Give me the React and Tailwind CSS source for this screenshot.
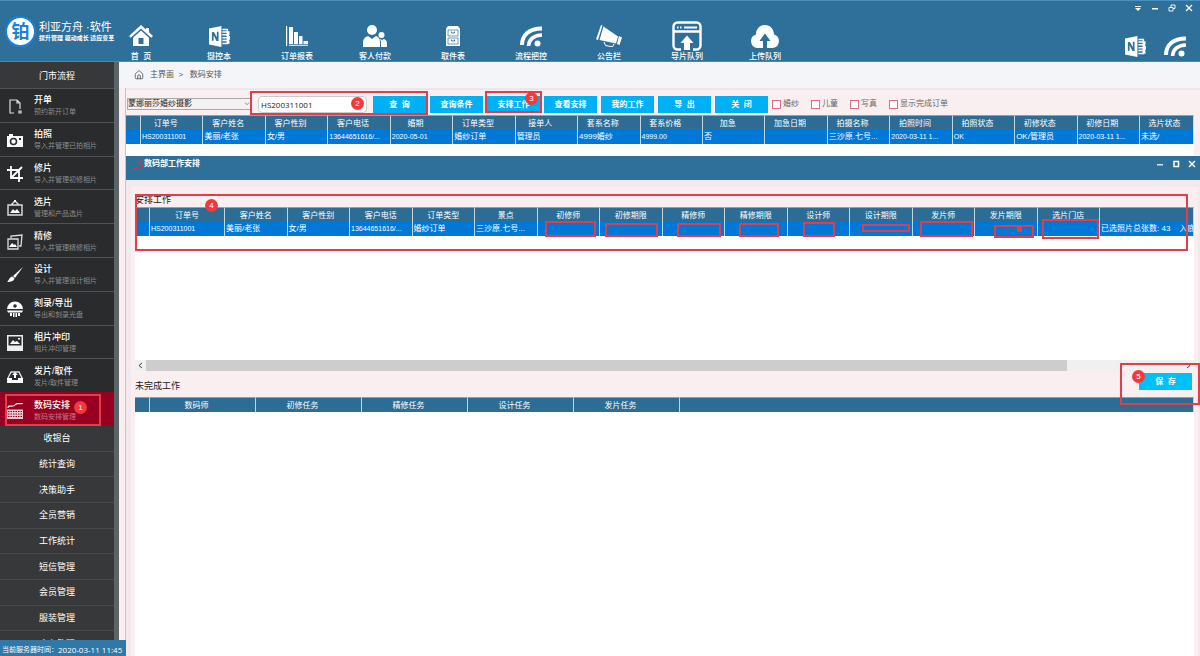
import { useState } from "react";
import { Home } from "lucide-react";
import clsx from "clsx";

const HomeIcon = () => (
  <svg viewBox="0 0 24 22" className="h-[22px] w-6" fill="#fff">
    <path d="M12 0 0 11l1.8 1.8L12 3.6l10.2 9.2L24 11l-4-3.7V3h-3v1.6z" />
    <path d="M12 5.6 4 12.8V21h16v-8.2zM14.5 19h-5v-6h5z" fillRule="evenodd" />
  </svg>
);

const NotebookIcon = () => (
  <svg viewBox="0 0 22 22" className="h-[21px] w-[21px]" fill="#fff">
    <path d="M13 0v22L0 19.5v-17zM3 6.5v9h1.8V9.8l3 5.9h2.2V6H8.200v5.800L5.200 6.400z" fillRule="evenodd" />
    <path d="M14 3h6v2.500h1.500v4H21v1h1v4h-1v1h.5v3H20V19h-6v-1.500h4.500V16H14v-1.500h4.500V13H14v-1.500h4.500V10H14V8.500h4.500V7H14V5.500h4.500v-1H14z" />
  </svg>
);

const BarsIcon = () => (
  <svg viewBox="0 0 22 20" className="h-5 w-[22px]" fill="#fff">
    <path d="M0 0h1.200v20H0zM3 1h4v17H3zM8 6h4v12H8zM13 10h3.500v8H13zM17.500 15H22v3h-4.500zM3 18.800h19v1H3z" />
  </svg>
);

const PeopleIcon = () => (
  <svg viewBox="0 0 24 22" className="h-[22px] w-6" fill="#fff">
    <circle cx="9" cy="5" r="5" />
    <path d="M0 22v-4c0-4 2-6 5-7l4 3 4-3c3 1 4 3 4 7v4z" />
    <circle cx="18.500" cy="10" r="3" />
    <path d="M18 22v-4c0-2-.5-3-1.200-4.200L19 15l2-1c2 .8 3 2.500 3 5v3z" />
  </svg>
);

const CabinetIcon = () => (
  <svg viewBox="0 0 14 20" className="h-5 w-[14px]">
    <path d="M2 0h10l2 2.500V20H0V2.500z" fill="#fff" />
    <path d="M2 4h10v6H2zM2 12h10v6H2z" fill="none" stroke="#2f709a" strokeWidth=".7" />
    <path d="M5.500 5.500v1.500h3v-1.500M5.500 13.500v1.500h3v-1.500" fill="none" stroke="#2f709a" strokeWidth=".9" />
  </svg>
);

const SignalIcon = () => (
  <svg viewBox="0 0 22 21" className="h-[21px] w-[22px]" fill="none" stroke="#fff">
    <path d="M2 19C2 9 9 2.500 22 2.500" strokeWidth="4" />
    <path d="M8.500 20C9 13 13 9.500 22 9" strokeWidth="3.500" />
    <circle cx="17.500" cy="17.500" r="3" fill="#fff" stroke="none" />
  </svg>
);

const MegaphoneIcon = () => (
  <svg viewBox="0 0 26 22" className="h-[22px] w-[26px]" fill="#fff">
    <path d="m5 0 1.500.6L2 15l-2-.8zM7.500 1.500 22 11.500l-2 7L3.500 15zM23 11l3 1.500-2.500 7.500-2.500-1z" />
    <path d="m8 17 1.500 3.500 7 1.300 1.500-3" fill="none" stroke="#fff" />
  </svg>
);

const ExportIcon = () => (
  <svg viewBox="0 0 30 30" className="h-[30px] w-[30px]" fill="none" stroke="#fff">
    <path d="M9 28.500H5.500a4 4 0 0 1-4-4v-19a4 4 0 0 1 4-4h19a4 4 0 0 1 4 4v19a4 4 0 0 1-4 4H21M2 10.500h26" strokeWidth="2.400" />
    <path d="M5 6.500h1.500M8 6.500h1.500M12 6.500h13" strokeWidth="2" />
    <path d="M15 14.500 8.500 22h3.500v7h6v-7h3.500z" fill="#fff" stroke="none" />
  </svg>
);

const CloudIcon = () => (
  <svg viewBox="0 0 30 23" className="h-[23px] w-[30px]">
    <path d="M7 23a7 7 0 0 1-1-13.600C6 4 10 0 15 0s9 4 9 9.400A7 7 0 0 1 23 23z" fill="#fff" />
    <path d="M15 8.500 9.500 16h3.500v7h4v-7h3.500z" fill="#2f709a" />
  </svg>
);

const NAV = [
  { label: "首  页", icon: HomeIcon },
  { label: "摄控本", icon: NotebookIcon },
  { label: "订单报表", icon: BarsIcon },
  { label: "客人付款", icon: PeopleIcon },
  { label: "取件表", icon: CabinetIcon },
  { label: "流程把控", icon: SignalIcon },
  { label: "公告栏", icon: MegaphoneIcon },
  { label: "导片队列", icon: ExportIcon },
  { label: "上传队列", icon: CloudIcon },
];

const STEPS = [
  {
    title: "开单", sub: "预约新开订单",
    icon: <path d="M7 15H3V2h7l3 3v6M10 2v3h3M12 13h2v2h-2z" fill="none" stroke="#ddd" strokeWidth="1.200" />,
  },
  {
    title: "拍照", sub: "导入并管理已拍相片",
    icon: <><path d="M0 4h2V2h4v2h10v11H0z" fill="#fff" /><circle cx="6.500" cy="9.500" r="3" fill="none" stroke="#2a2b2c" strokeWidth="1.600" /><path d="M12 6h2v2h-2z" fill="#2a2b2c" /></>,
  },
  {
    title: "修片", sub: "导入并管理初修相片",
    icon: <path d="M4 0v12h12M0 4h12v12M4 12 15 1" fill="none" stroke="#fff" strokeWidth="1.800" />,
  },
  {
    title: "选片", sub: "管理和产品选片",
    icon: <><path d="M1 5h14v10H1zM4 5l4-4 4 4" fill="none" stroke="#ddd" strokeWidth="1.400" /><path d="m3 13 3-4 2 2 2-2 3 4zM7 0h2v2H7z" fill="#fff" /></>,
  },
  {
    title: "精修", sub: "导入并管理精修相片",
    icon: <><path d="M4 4V2l11-1-1 11h-2M1 5h10v10H1z" fill="none" stroke="#ddd" strokeWidth="1.300" /><path d="m2 13 3-4 2 2 1-1 2 3z" fill="#fff" /></>,
  },
  {
    title: "设计", sub: "导入并管理设计相片",
    icon: <path d="M16 0 8 11 6 9zM5.500 9.500l2 2C7 14 4 15 0 15c2-1 2-5 5.500-5.500z" fill="#fff" />,
  },
  {
    title: "刻录/导出", sub: "导出和刻录光盘",
    icon: <><path d="M0 8a8 7.500 0 0 1 16 0zM0 9.500h16l-1 2H1zM3 12h2v3H3zM6 12h1.500v4H6zM8.500 12H10v4H8.500zM11 12h2v3h-2z" fill="#fff" /><circle cx="8" cy="5" r="1.800" fill="#2a2b2c" /></>,
  },
  {
    title: "相片冲印", sub: "相片冲印管理",
    icon: <><path d="M0 0h16v16H0zM1.500 1.500v9h13v-9z" fill="#eee" fillRule="evenodd" /><path d="m3 9 3-4 2 2 2-1 3 3zM11 3h2v1.500h-2z" fill="#fff" /></>,
  },
  {
    title: "发片/取件", sub: "发片/取件管理",
    icon: <><path d="M1 9 4 3h8l3 6v4H1z" fill="none" stroke="#ddd" strokeWidth="1.400" /><path d="M0 9h5v2h6V9h5v5H0zM8 3 5 6h2v3h2V6h2z" fill="#fff" /></>,
  },
  {
    title: "数码安排", sub: "数码安排管理", active: true,
    icon: <><path d="M1 5c0-4 5 0 7-3s5 0 8-2" fill="none" stroke="#eed" strokeWidth="1.300" /><path d="M0 6.500h16V16H0z" fill="#e9c9cf" /><path d="M1 8.500h14M1 11h14M1 13.500h14" stroke="#980022" strokeDasharray="1.500 1" /></>,
  },
];

const MENU = ["收银台", "统计查询", "决策助手", "全员营销", "工作统计", "短信管理", "会员管理", "服装管理", "库存管理"];

const ORDER_COLUMNS = [
  ["订单号", "HS200311001"], ["客户姓名", "美丽/老张"], ["客户性别", "女/男"], ["客户电话", "13644651616/..."],
  ["婚期", "2020-05-01"], ["订单类型", "婚纱订单"], ["接单人", "管理员"], ["套系名称", "4999婚纱"],
  ["套系价格", "4999.00"], ["加急", "否"], ["加急日期", ""], ["拍摄名称", "三沙原.七号..."],
  ["拍照时间", "2020-03-11 1..."], ["拍照状态", "OK"], ["初修状态", "OK/管理员"], ["初修日期", "2020-03-11 1..."],
  ["选片状态", "未选/"],
];

const WORK_COLUMNS = [
  { name: "订单号", value: "HS200311001" },
  { name: "客户姓名", value: "美丽/老张" },
  { name: "客户性别", value: "女/男" },
  { name: "客户电话", value: "13644651616/..." },
  { name: "订单类型", value: "婚纱订单" },
  { name: "景点", value: "三沙原.七号..." },
  { name: "初修师", mark: "left-[7px] -top-px h-4 w-[51px]" },
  { name: "初修期限", mark: "left-[5px] top-px h-3.5 w-[53px]" },
  { name: "精修师", mark: "left-3.5 top-px h-3.5 w-11" },
  { name: "精修期限", mark: "left-3.5 top-px h-3.5 w-10" },
  { name: "设计师", mark: "left-[15px] top-0 h-[15px] w-8" },
  { name: "设计期限", mark: "left-3 top-0.5 h-2 w-12" },
  { name: "发片师", mark: "left-[7px] -top-px h-4 w-[53px]" },
  { name: "发片期限", mark: "left-[19px] top-[3px] h-[13px] w-10", dot: true },
  { name: "选片门店", mark: "left-1 -top-[3px] h-5 w-[57px]" },
];

const TASK_COLUMNS = ["数码师", "初修任务", "精修任务", "设计任务", "发片任务"];

const HEAD_ROW = "h-[15px] bg-[#2c6c95] text-[8px] leading-[13px] text-white";
const HEAD_CELL = "border-t border-r border-t-[#8fa0aa] border-r-[#c3d6e2] p-0 font-normal";
const BODY_CELL = "relative border-r border-[#b9d8f2] p-0";

function CellText({ children }) {
  const hasHan = /[\u4e00-\u9fff]/.test(children);
  return (
    <div className={clsx("overflow-hidden pl-px leading-[14px] whitespace-pre", hasHan ? "text-[8px]" : "text-[7px]")}>
      {children || " "}
    </div>
  );
}

function Mark({ className }) {
  return <span className={clsx("pointer-events-none absolute z-10 border-2 border-[#e23d48]", className)} />;
}

function Badge({ n, className }) {
  return (
    <span className={clsx("absolute z-20 flex h-[13px] w-[13px] items-center justify-center rounded-full bg-[#f23a3c] text-[8px] leading-none text-white", className)}>
      {n}
    </span>
  );
}

function ActionButton({ children, className }) {
  return (
    <button type="button" className={clsx("h-[17px] w-[53px] shrink-0 text-[8px] leading-[17px] font-bold whitespace-pre text-white", className || "bg-[#00b0f5]")}>
      {children}
    </button>
  );
}

function Header() {
  return (
    <header className="relative flex h-[62px] shrink-0 items-start border-t border-b border-t-[#4d90bd] border-b-[#4a86ad] bg-[#2f709a] text-white">
      <div className="flex w-[102px] shrink-0 items-center gap-[3px] pt-[15px] pl-[5px]">
        <div className="flex h-[31px] w-[31px] shrink-0 items-center justify-center rounded-full border-2 border-[#1b82d8] bg-white font-['Liberation_Serif','Noto_Sans_CJK_SC',serif] text-[18px] leading-none font-bold text-[#1d7fd6]">
          铂
        </div>
        <div className="whitespace-nowrap">
          <div className="text-[11px] leading-[13px]">利亚方舟 ·软件</div>
          <div className="text-[6px] leading-[8px] font-bold">提升管理 驱动成长 适应变革</div>
        </div>
      </div>
      <nav className="flex pt-[19px]">
        {NAV.map(({ label, icon: Icon }) => (
          <a key={label} href="#" className="flex w-[78px] flex-col items-center">
            <span className="flex h-8 items-center"><Icon /></span>
            <span className="text-[8px] leading-[10px] font-medium whitespace-pre">{label}</span>
          </a>
        ))}
      </nav>
      <div className="ml-auto flex flex-col items-end pr-[7px]">
        <div className="flex h-[14px] items-center gap-[9px]">
          <button type="button" aria-label="菜单" className="h-2 w-2">
            <svg viewBox="0 0 8 8" fill="#fff"><path d="M1 2h6v1H1zM1 4h6L4 7z" /></svg>
          </button>
          <button type="button" aria-label="最小化" className="h-2 w-2">
            <svg viewBox="0 0 8 8" fill="#fff"><path d="M1 4h6v1.500H1z" /></svg>
          </button>
          <button type="button" aria-label="还原" className="h-2 w-2">
            <svg viewBox="0 0 8 8" fill="none" stroke="#fff" strokeWidth=".9"><path d="M1 3.500h4V7H1zM3 3V1h4v3.500H5" /></svg>
          </button>
          <button type="button" aria-label="关闭" className="h-2 w-2">
            <svg viewBox="0 0 8 8" stroke="#fff" strokeWidth="1.400"><path d="m1 1 6 6M7 1 1 7" /></svg>
          </button>
        </div>
        <div className="flex gap-[18px] pt-[21px] pr-[7px]">
          <NotebookIcon />
          <SignalIcon />
        </div>
      </div>
    </header>
  );
}

function Sidebar() {
  return (
    <aside className="mb-4 flex w-[119px] shrink-0 flex-col overflow-hidden border-r-[5px] border-[#5b6467] bg-[#363839] text-white">
      <h2 className="h-[26px] shrink-0 text-center text-[9px] leading-[28px] font-normal">门市流程</h2>
      <ul className="grid h-[338px] shrink-0 grid-rows-10 bg-[#2a2b2c]">
        {STEPS.map((s) => (
          <li key={s.title} className={clsx("relative border-t", s.active ? "border-[#980022] bg-[#980022]" : "border-[#505253]")}>
            <a href="#" className="flex h-full items-center gap-[11px] pt-0.5 pl-[7px]">
              <svg viewBox="0 0 16 16" className="h-4 w-4 shrink-0">{s.icon}</svg>
              <span className="flex flex-col whitespace-nowrap">
                <span className="text-[9px] leading-3 font-medium">{s.title}</span>
                <span className={clsx("text-[7px] leading-3", s.active ? "text-[#c07a88]" : "text-[#8a8c8d]")}>{s.sub}</span>
              </span>
            </a>
            {s.active && (
              <>
                <Mark className="top-px left-[5px] h-8 w-24" />
                <Badge n={1} className="top-2 left-[74px]" />
              </>
            )}
          </li>
        ))}
      </ul>
      <ul className="grid h-[231px] shrink-0 grid-rows-9">
        {MENU.map((m) => (
          <li key={m} className="border-b border-[#47494a]">
            <a href="#" className="flex h-full items-center justify-center text-[9px] leading-3">{m}</a>
          </li>
        ))}
      </ul>
    </aside>
  );
}

function Toolbar() {
  const [code, setCode] = useState("HS200311001");
  return (
    <div className="flex h-[27px] shrink-0 items-start border-t-2 border-[#ece6ea] pt-1.5 pl-px text-[8px]">
      <div className="relative mt-0.5 mr-1.5 w-[125px] shrink-0">
        <select aria-label="门店" className="block h-3 w-full appearance-none border border-[#a9a9a9] bg-[#f4f1f2] text-[8px] leading-[10px] text-[#222]">
          <option>蒙娜丽莎婚纱摄影</option>
        </select>
        <svg viewBox="0 0 8 6" className="pointer-events-none absolute top-1 right-0.5 h-1 w-1.5" fill="none" stroke="#555"><path d="m1 1 3 3 3-3" /></svg>
      </div>
      <div className="relative flex shrink-0 gap-1.5">
        <input
          aria-label="订单号"
          value={code}
          onChange={(e) => setCode(e.target.value)}
          className="h-[17px] w-[109px] rounded-sm border border-[#ccc] bg-white px-0.5 font-['Open_Sans',sans-serif] text-[8px] text-[#222]"
        />
        <ActionButton>查  询</ActionButton>
        <Mark className="-top-[5px] -left-2 h-6 w-[178px]" />
        <Badge n={2} className="top-px left-[93px]" />
      </div>
      <div className="ml-1 flex shrink-0 gap-1">
        <ActionButton>查询条件</ActionButton>
        <div className="relative">
          <ActionButton>安排工作</ActionButton>
          <Mark className="-top-[5px] -left-0.5 h-[22px] w-[57px]" />
          <Badge n={3} className="-top-1 left-[38px]" />
        </div>
        <ActionButton>查看安排</ActionButton>
        <ActionButton>我的工作</ActionButton>
        <ActionButton>导  出</ActionButton>
        <ActionButton>关  闭</ActionButton>
      </div>
      <div className="ml-1 flex gap-3 pt-[3px] text-[#666]">
        {["婚纱", "儿童", "写真", "显示完成订单"].map((label) => (
          <label key={label} className="flex items-center gap-0.5 leading-[10px] whitespace-nowrap">
            <input type="checkbox" className="h-[9px] w-[9px] appearance-none border border-[#dc7089] bg-white checked:bg-[#dc7089]" />
            {label}
          </label>
        ))}
      </div>
    </div>
  );
}

function OrderTable() {
  return (
    <div className="mr-1.5 bg-white pb-3">
      <table className="w-full table-fixed border-separate border-spacing-0">
        <colgroup>
          <col className="w-[15px]" />
          {ORDER_COLUMNS.map(([name], i) => <col key={name} className={i === 16 ? "w-[54px]" : undefined} />)}
        </colgroup>
        <thead>
          <tr className={HEAD_ROW}>
            <th className={HEAD_CELL} />
            {ORDER_COLUMNS.map(([name], i) => (
              <th key={name} className={clsx(HEAD_CELL, i < 16 ? "pr-3" : "pr-1")}>{name}</th>
            ))}
          </tr>
        </thead>
        <tbody>
          <tr className="bg-[#0078d7] text-white">
            <td className={BODY_CELL} />
            {ORDER_COLUMNS.map(([name, value]) => (
              <td key={name} className={BODY_CELL}><CellText>{value}</CellText></td>
            ))}
          </tr>
        </tbody>
      </table>
    </div>
  );
}

function WorkTable() {
  return (
    <div className="h-[153px] shrink-0 overflow-hidden bg-white">
      <table className="w-full table-fixed border-separate border-spacing-0">
        <colgroup>
          <col className="w-[15px]" />
          {WORK_COLUMNS.map((c, i) => <col key={c.name} className={i === 0 ? "w-[75px]" : undefined} />)}
          <col className="w-[94px]" />
        </colgroup>
        <thead>
          <tr className={HEAD_ROW}>
            <th className={HEAD_CELL} />
            {WORK_COLUMNS.map((c) => <th key={c.name} className={HEAD_CELL}>{c.name}</th>)}
            <th className={HEAD_CELL} />
          </tr>
        </thead>
        <tbody>
          <tr className="bg-[#0078d7] text-white">
            <td className={BODY_CELL} />
            {WORK_COLUMNS.map((c) => (
              <td key={c.name} className={BODY_CELL}>
                <CellText>{c.value || ""}</CellText>
                {c.mark && <Mark className={c.mark} />}
                {c.dot && <span className="absolute top-[5px] left-[42px] z-10 h-[5px] w-[5px] bg-[#e23d48]" />}
              </td>
            ))}
            <td className={BODY_CELL}><CellText>{"已选照片总张数: 43    入底"}</CellText></td>
          </tr>
        </tbody>
      </table>
    </div>
  );
}

function TaskTable() {
  return (
    <table className="w-full table-fixed border-separate border-spacing-0">
      <colgroup>
        <col className="w-[15px]" />
        {TASK_COLUMNS.map((name) => <col key={name} className="w-[106px]" />)}
        <col />
      </colgroup>
      <thead>
        <tr className={HEAD_ROW}>
          <th className={HEAD_CELL} />
          {TASK_COLUMNS.map((name) => <th key={name} className={clsx(HEAD_CELL, "pr-3")}>{name}</th>)}
          <th className={HEAD_CELL} />
        </tr>
      </thead>
    </table>
  );
}

function ArrangeDialog() {
  return (
    <section className="flex min-h-0 grow flex-col bg-[#f3e8eb]">
      <div className="flex h-6 shrink-0 items-start bg-[#2f709a] pt-0.5 pr-1 pl-1.5 text-white">
        <svg viewBox="0 0 12 10" className="mt-0.5 h-2.5 w-3 shrink-0" fill="none" stroke="#e8303c"><path d="M7 1h4M7 1v3c5-1 5 4 1 5M1 9l5-1M3 7l3 1" /></svg>
        <h1 className="text-[8px] leading-3 font-bold">数码部工作安排</h1>
        <div className="ml-auto flex gap-2 pt-0.5">
          <button type="button" aria-label="最小化" className="h-2 w-2">
            <svg viewBox="0 0 8 8" fill="#cfe6f5"><path d="M1 4h6v1.500H1z" /></svg>
          </button>
          <button type="button" aria-label="最大化" className="h-2 w-2">
            <svg viewBox="0 0 8 8" fill="none" stroke="#fff" strokeWidth="1.500"><path d="M2 1.500h4.500v5H2z" /></svg>
          </button>
          <button type="button" aria-label="关闭" className="h-2 w-2">
            <svg viewBox="0 0 8 8" stroke="#fff" strokeWidth="1.500"><path d="m1 1 6 6M7 1 1 7" /></svg>
          </button>
        </div>
      </div>
      <div className="mt-[7px] mr-0.5 ml-[5px] flex min-h-0 grow flex-col bg-[#f9eef0] pr-1 pl-1">
        <div className="relative shrink-0 pt-1.5">
          <h2 className="text-[9px] leading-[14px] font-normal text-[#222]">安排工作</h2>
          <WorkTable />
          <Mark className="top-[7px] right-1.5 left-0 h-[57px]" />
          <Badge n={4} className="top-3 left-[70px]" />
        </div>
        <div className="flex h-[11px] shrink-0 items-center bg-[#f0f0f0]">
          <svg viewBox="0 0 11 11" className="h-[11px] w-[11px]" fill="none" stroke="#444"><path d="M7 3 4 5.500 7 8" /></svg>
          <div className="h-full w-[87%] bg-[#cdcdcd]" />
          <svg viewBox="0 0 11 11" className="ml-auto h-[11px] w-[11px]" fill="none" stroke="#444"><path d="m4 3 3 2.500L4 8" /></svg>
        </div>
        <div className="relative flex h-[26px] shrink-0 items-start justify-between pt-0.5">
          <h2 className="pt-1.5 text-[9px] leading-[14px] font-normal text-[#222]">未完成工作</h2>
          <ActionButton className="mr-0.5 bg-[#00c0fa]">保  存</ActionButton>
          <Mark className="-top-2 -right-1.5 h-[42px] w-20" />
          <Badge n={5} className="-top-px right-[49px]" />
        </div>
        <div className="grow bg-white">
          <TaskTable />
        </div>
      </div>
    </section>
  );
}

export default function App() {
  return (
    <div className="relative flex h-screen flex-col overflow-hidden bg-[#f9eef0] font-['Liberation_Sans','Noto_Sans_CJK_SC',sans-serif]">
      <Header />
      <div className="flex min-h-0 grow">
        <Sidebar />
        <main className="flex min-w-0 grow flex-col">
          <div className="flex h-[26px] shrink-0 items-center bg-[#f4f5f8] pl-[15px] text-[8px] whitespace-pre text-[#555]">
            <Home className="mr-1.5 h-2.5 w-2.5" strokeWidth={2} />
            <a href="#">主界面</a>
            <span>{"  >   "}</span>
            <span>数码安排</span>
          </div>
          <div className="ml-1.5 flex min-h-0 grow flex-col border-l border-[#c9c3c6]">
            <Toolbar />
            <OrderTable />
            <ArrangeDialog />
          </div>
        </main>
      </div>
      <footer className="absolute bottom-0 left-0 z-30 flex h-4 w-[126px] items-end overflow-hidden bg-[#2f78a8] pl-0.5 whitespace-nowrap text-white">
        <span className="text-[7px] leading-3">当前服务器时间：</span>
        <span className="font-['Open_Sans',sans-serif] text-[8px] leading-3">2020-03-11 11:45</span>
      </footer>
    </div>
  );
}
